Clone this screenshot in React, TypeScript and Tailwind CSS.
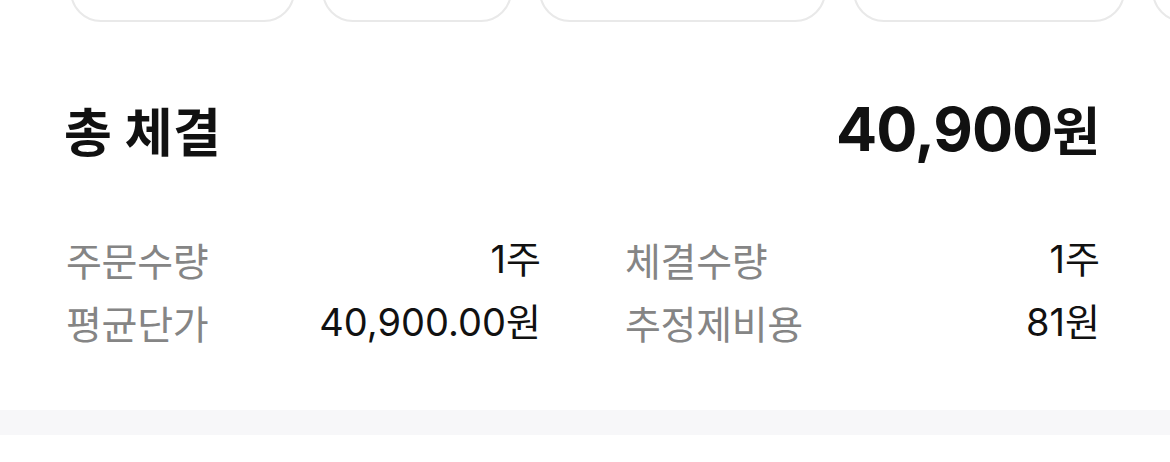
const chips = ["w-[225px]", "w-[190px]", "w-[287px]", "w-[272px]", "w-[200px]"];

const rows = [
  [
    { label: "주문수량", value: "1주" },
    { label: "체결수량", value: "1주" },
  ],
  [
    { label: "평균단가", value: "40,900.00원" },
    { label: "추정제비용", value: "81원" },
  ],
];

const InfoCell = ({ label, value }: { label: string; value: string }) => (
  <div className="flex h-[63px] items-center justify-between">
    <span className="text-[39px] text-[#858585] tracking-[-0.3px]">{label}</span>
    <span className="text-[38px] text-[#111111] font-['Inter','Noto_Sans_CJK_KR',sans-serif]">{value}</span>
  </div>
);

export default function App() {
  return (
    <div className="w-[1170px] h-[462px] overflow-hidden bg-white font-['Noto_Sans_CJK_KR',sans-serif]">
      {/* chip row, scrolled so only the bottoms show */}
      <div className="flex gap-[27px] pl-[70px] -mt-[40px] whitespace-nowrap">
        {chips.map((w, i) => (
          <div key={i} className={`${w} h-[62px] shrink-0 rounded-[34px] border-[2.5px] border-[#e9e9e9]`} />
        ))}
      </div>

      {/* total */}
      <div className="mt-[78px] flex h-[60px] items-center justify-between pl-[64px] pr-[70px]">
        <span className="text-[52px] font-semibold tracking-[0.5px] text-[#111111]">총 체결</span>
        <span className="flex items-baseline text-[#111111]">
          <span className="font-['Inter',sans-serif] text-[61px] font-bold tracking-[-1px]">40,900</span>
          <span className="text-[52px] font-bold">원</span>
        </span>
      </div>

      {/* details */}
      <div className="mt-[68px] grid grid-cols-2 gap-x-[84px] pl-[66px] pr-[70px]">
        {rows.map((row) => row.map((c) => <InfoCell key={c.label} {...c} />))}
      </div>

      <div className="mt-[56px] h-[25px] bg-[#f7f7f9]" />
    </div>
  );
}
